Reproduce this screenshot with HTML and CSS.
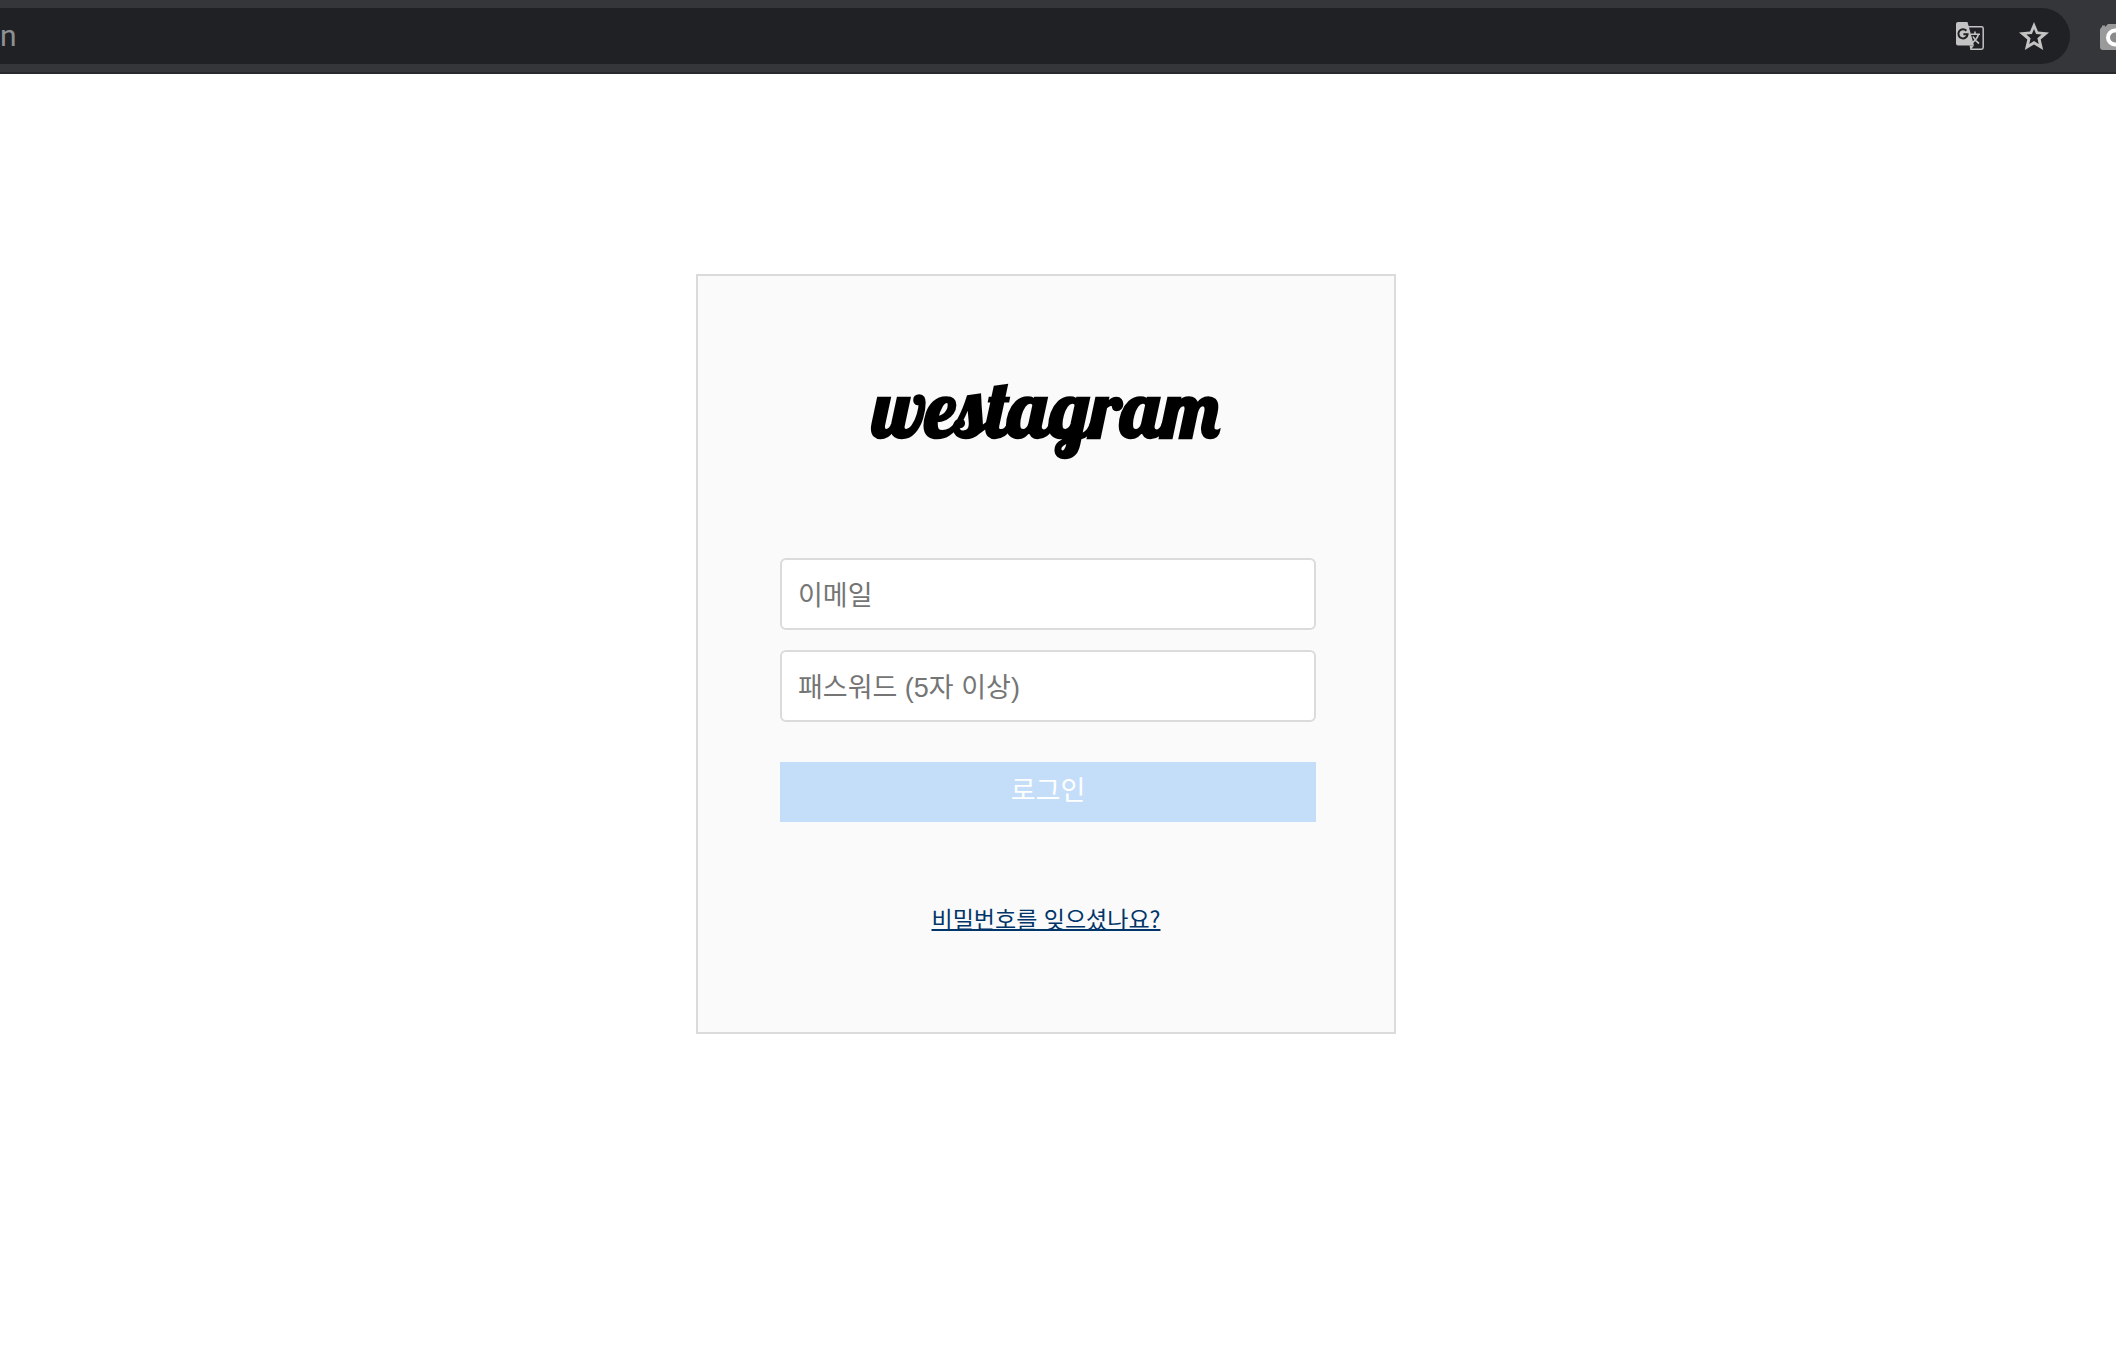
FILE: index.html
```html
<!DOCTYPE html>
<html lang="ko">
<head>
<meta charset="utf-8">
<meta name="viewport" content="width=device-width, initial-scale=1">
<title>westagram</title>
<link rel="stylesheet" href="styles.css">
</head>
<body>
<header class="toolbar">
  <div class="address-bar">
    <span class="address">n</span>
    <div class="address-actions">
      <button class="icon-button" type="button" aria-label="번역">
        <svg width="28" height="28" viewBox="0 0 28 28">
          <path d="M10 4.800H25.500Q27.200 4.800 27.200 6.500V25.500Q27.200 27.200 25.500 27.200H14.500" fill="none" stroke="#c3c3c3" stroke-width="1.500"/>
          <path d="M2 0H11.500L18 23.500H2Q0 23.500 0 21.500V2Q0 0 2 0Z" fill="#c3c3c3"/>
          <path d="M13.500 23.500H18L14.500 28Z" fill="#c3c3c3"/>
          <path d="M10.400 8.700A4.600 4.600 0 1 0 11.600 12.200H7.400" fill="none" stroke="#202124" stroke-width="2"/>
          <path d="M14.800 12.300H24M19 9.500V12.300M22.500 12.300Q21 17.500 16.500 20.500M17 14.500Q19 18.500 23 21.500" fill="none" stroke="#c3c3c3" stroke-width="1.600"/>
        </svg>
      </button>
      <button class="icon-button" type="button" aria-label="북마크">
        <svg width="30" height="28" viewBox="0 0 30 28">
          <path fill-rule="evenodd" fill="#c3c3c3" d="M15 0L19 9.500L30 10.500L21.700 17.400L24.200 28L15 22.500L5.800 28L8.300 17.400L0 10.500L11 9.500ZM15 6.900L12.900 12.100L7.400 12.600L11.600 16.200L10.300 21.900L15 19.100L19.700 21.900L18.400 16.200L22.600 12.600L17.100 12.100Z"/>
        </svg>
      </button>
    </div>
  </div>
  <button class="extension" type="button" aria-label="카메라">
    <svg width="32" height="28" viewBox="0 0 32 28">
      <path d="M0 8Q0 6 2 5V3.500H5V5L8 2H24L27 5H30Q32 5 32 7V25Q32 28 29 28H3Q0 28 0 25Z" fill="#9a9a9a"/>
      <circle cx="15" cy="15.500" r="7" fill="#8a8a8a" stroke="#fff" stroke-width="4"/>
    </svg>
  </button>
</header>
<main class="page">
  <form class="login-card">
    <h1 class="logo">westagram</h1>
    <div class="fields">
      <input class="field" type="email" placeholder="이메일" aria-label="이메일">
      <input class="field" type="password" placeholder="패스워드 (5자 이상)" aria-label="패스워드">
      <button class="login-button" type="button">로그인</button>
    </div>
    <a class="forgot-link" href="#">비밀번호를 잊으셨나요?</a>
  </form>
</main>
</body>
</html>
```
FILE: styles.css
```css
* {
  box-sizing: border-box;
}

body {
  margin: 0;
  background: #fff;
  font-family: "Liberation Sans", "Noto Sans CJK KR", sans-serif;
}

button {
  border: 0;
  font-family: inherit;
}

.toolbar {
  display: flex;
  height: 74px;
  padding: 8px 0;
  overflow: hidden;
  background: #35363a;
  border-bottom: 2px solid #28292c;
}

.address-bar {
  display: flex;
  flex: 1;
  align-items: center;
  justify-content: space-between;
  height: 56px;
  padding: 0 21px 0 0;
  background: #202124;
  border-radius: 0 28px 28px 0;
}

.address {
  color: #8f9194;
  font: 30px/40px Roboto, sans-serif;
}

.address-actions {
  display: flex;
  gap: 35px;
}

.icon-button,
.extension {
  display: flex;
  align-items: center;
  padding: 0;
  background: none;
}

.extension {
  flex: none;
  width: 46px;
  height: 56px;
  padding-left: 30px;
}

.extension svg {
  flex: none;
}

.page {
  display: flex;
  justify-content: center;
  padding: 200px 24px 200px 0;
}

.login-card {
  display: flex;
  flex-direction: column;
  width: 100%;
  max-width: 700px;
  padding: 82px 78px 96px;
  background: #fafafa;
  border: 2px solid #dbdbdb;
}

.logo {
  margin: 0 0 100px;
  color: #000;
  font: bold 80px/100px Lobster, cursive;
  text-align: center;
}

.fields {
  display: flex;
  flex-direction: column;
  gap: 20px;
  padding-left: 4px;
}

.field {
  width: 100%;
  height: 72px;
  padding: 4px 16px 0;
  background: #fff;
  border: 2px solid #dbdbdb;
  border-radius: 6px;
  font-family: inherit;
  font-size: 27px;
}

.field::placeholder {
  color: #757575;
}

.login-button {
  height: 60px;
  margin-top: 20px;
  padding: 0 0 8px;
  background: #c4def9;
  color: #fff;
  font-size: 27px;
}

.forgot-link {
  align-self: center;
  margin-top: 78px;
  color: #003569;
  font-family: "Noto Sans CJK KR", sans-serif;
  font-size: 23px;
  line-height: 36px;
  text-decoration: underline;
  text-decoration-thickness: 2px;
  text-decoration-skip-ink: none;
}
```
